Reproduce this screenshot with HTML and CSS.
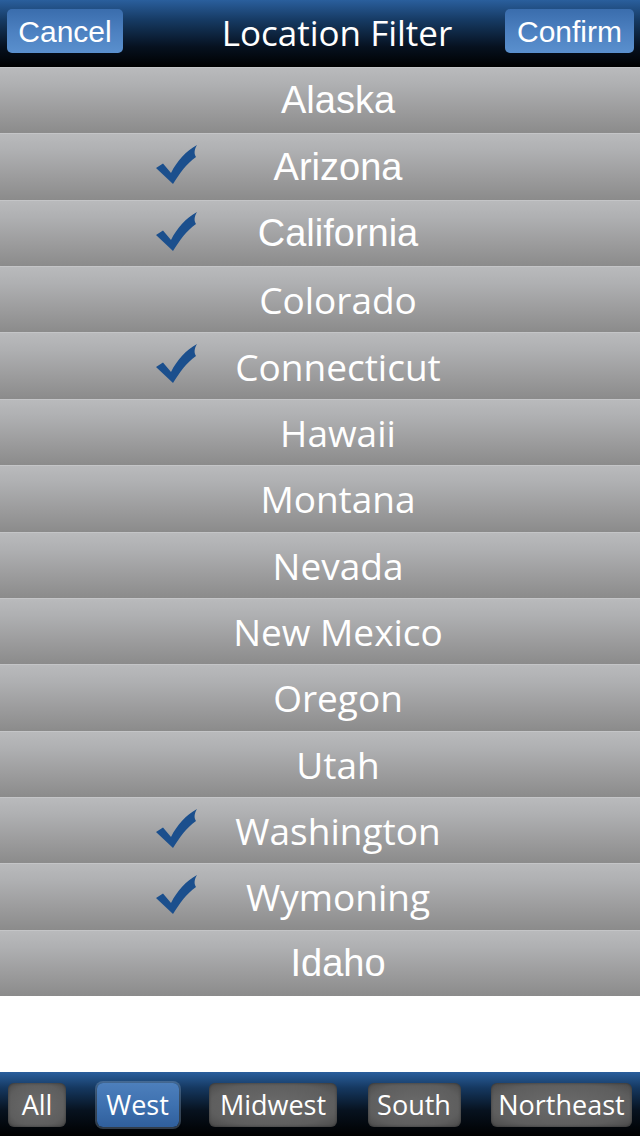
FILE: index.html
```html
<!DOCTYPE html>
<html>
<head>
<meta charset="utf-8">
<link rel="stylesheet" href="styles.css">
</head>
<body>
<div class="screen">
  <header class="topbar">
    <button class="navbtn">Cancel</button>
    <div class="title">Location Filter</div>
    <button class="navbtn">Confirm</button>
  </header>
  <ul class="list">
    <li class="row helv">Alaska</li>
    <li class="row helv"><svg class="check" viewBox="0 0 42 40"><path d="M0,23 L7,18.5 L15,28 C21,16 30,6 41,0 C38,5 38,9 40,12 C30,19 24,28 17,39 Z"/></svg>Arizona</li>
    <li class="row helv"><svg class="check" viewBox="0 0 42 40"><path d="M0,23 L7,18.5 L15,28 C21,16 30,6 41,0 C38,5 38,9 40,12 C30,19 24,28 17,39 Z"/></svg>California</li>
    <li class="row">Colorado</li>
    <li class="row"><svg class="check" viewBox="0 0 42 40"><path d="M0,23 L7,18.5 L15,28 C21,16 30,6 41,0 C38,5 38,9 40,12 C30,19 24,28 17,39 Z"/></svg>Connecticut</li>
    <li class="row">Hawaii</li>
    <li class="row">Montana</li>
    <li class="row">Nevada</li>
    <li class="row">New Mexico</li>
    <li class="row">Oregon</li>
    <li class="row">Utah</li>
    <li class="row"><svg class="check" viewBox="0 0 42 40"><path d="M0,23 L7,18.5 L15,28 C21,16 30,6 41,0 C38,5 38,9 40,12 C30,19 24,28 17,39 Z"/></svg>Washington</li>
    <li class="row"><svg class="check" viewBox="0 0 42 40"><path d="M0,23 L7,18.5 L15,28 C21,16 30,6 41,0 C38,5 38,9 40,12 C30,19 24,28 17,39 Z"/></svg>Wymoning</li>
    <li class="row helv">Idaho</li>
  </ul>
  <div class="spacer"></div>
  <footer class="tabbar">
    <button class="tab tab-all">All</button>
    <button class="tab tab-west active">West</button>
    <button class="tab tab-midwest">Midwest</button>
    <button class="tab tab-south">South</button>
    <button class="tab tab-northeast">Northeast</button>
  </footer>
</div>
</body>
</html>
```
FILE: styles.css
```css
* { box-sizing: border-box; }
html, body { margin: 0; padding: 0; background: #fff; }
.screen {
  width: 640px;
  height: 1136px;
  display: flex;
  flex-direction: column;
  overflow: hidden;
}
.topbar {
  height: 67px;
  flex: none;
  display: flex;
  align-items: flex-start;
  justify-content: space-between;
  padding: 9px 6px 0 7px;
  background: linear-gradient(to bottom, #2a5f9d 0%, #163a63 30%, #06111f 70%, #000 100%);
}
.navbtn {
  height: 44px;
  border: none;
  border-radius: 5px;
  background: linear-gradient(to bottom, #3a6dad 0%, #4c80c0 50%, #5a90ce 100%);
  color: #fff;
  font-family: "Liberation Sans", Arial, sans-serif;
  font-size: 30px;
  padding: 0 10px;
  line-height: 46px;
}
.navbtn:first-child { width: 116px; }
.navbtn:last-child { width: 129px; }
.title {
  color: #fff;
  font-family: "Open Sans", sans-serif;
  font-size: 35px;
  line-height: 1;
  margin-top: 6px;
  padding-left: 46px;
}
.list {
  list-style: none;
  margin: 0;
  padding: 0;
  height: 929px;
  flex: none;
  display: flex;
  flex-direction: column;
}
.row {
  flex: 1;
  position: relative;
  display: flex;
  align-items: center;
  justify-content: center;
  padding-left: 36px;
  color: #fff;
  font-family: "Open Sans", sans-serif;
  font-size: 37px;
  background: linear-gradient(to bottom, #b9babc 0%, #afb0b2 25%, #9c9c9d 65%, #8b8b8b 100%);
  border-top: 1px solid #c4c5c7;
}
.row.helv {
  font-family: "Liberation Sans", Arial, sans-serif;
  font-size: 38px;
}
.check {
  position: absolute;
  left: 156px;
  top: 11px;
  width: 42px;
  height: 40px;
  fill: #1b4f8d;
}
.spacer { flex: 1; background: #fff; }
.tabbar {
  height: 64px;
  flex: none;
  display: flex;
  align-items: center;
  justify-content: space-between;
  padding: 0 8px;
  background: linear-gradient(to bottom, #2a5f9d 0%, #153860 25%, #07121f 60%, #000 100%);
}
.tab {
  height: 44px;
  margin-top: 2px;
  border: none;
  border-radius: 6px;
  background: radial-gradient(ellipse at center, #6b6b6b 0%, #5e5e5e 70%, #4a4a4a 100%);
  color: #fff;
  font-family: "Open Sans", sans-serif;
  font-size: 27px;
  padding: 0;
  text-align: center;
  white-space: nowrap;
  line-height: 44px;
  box-shadow: inset 0 0 3px rgba(0,0,0,0.4);
}
.tab-all { width: 58px; }
.tab-west { width: 82px; }
.tab-midwest { width: 128px; }
.tab-south { width: 93px; }
.tab-northeast { width: 141px; }
.tab.active {
  background: linear-gradient(to bottom, #4d7fbc 0%, #3e71b0 50%, #305f9c 100%);
  box-shadow: 0 0 0 2px rgba(140,170,200,0.35), 0 2px 3px rgba(0,0,0,0.6);
}
```
